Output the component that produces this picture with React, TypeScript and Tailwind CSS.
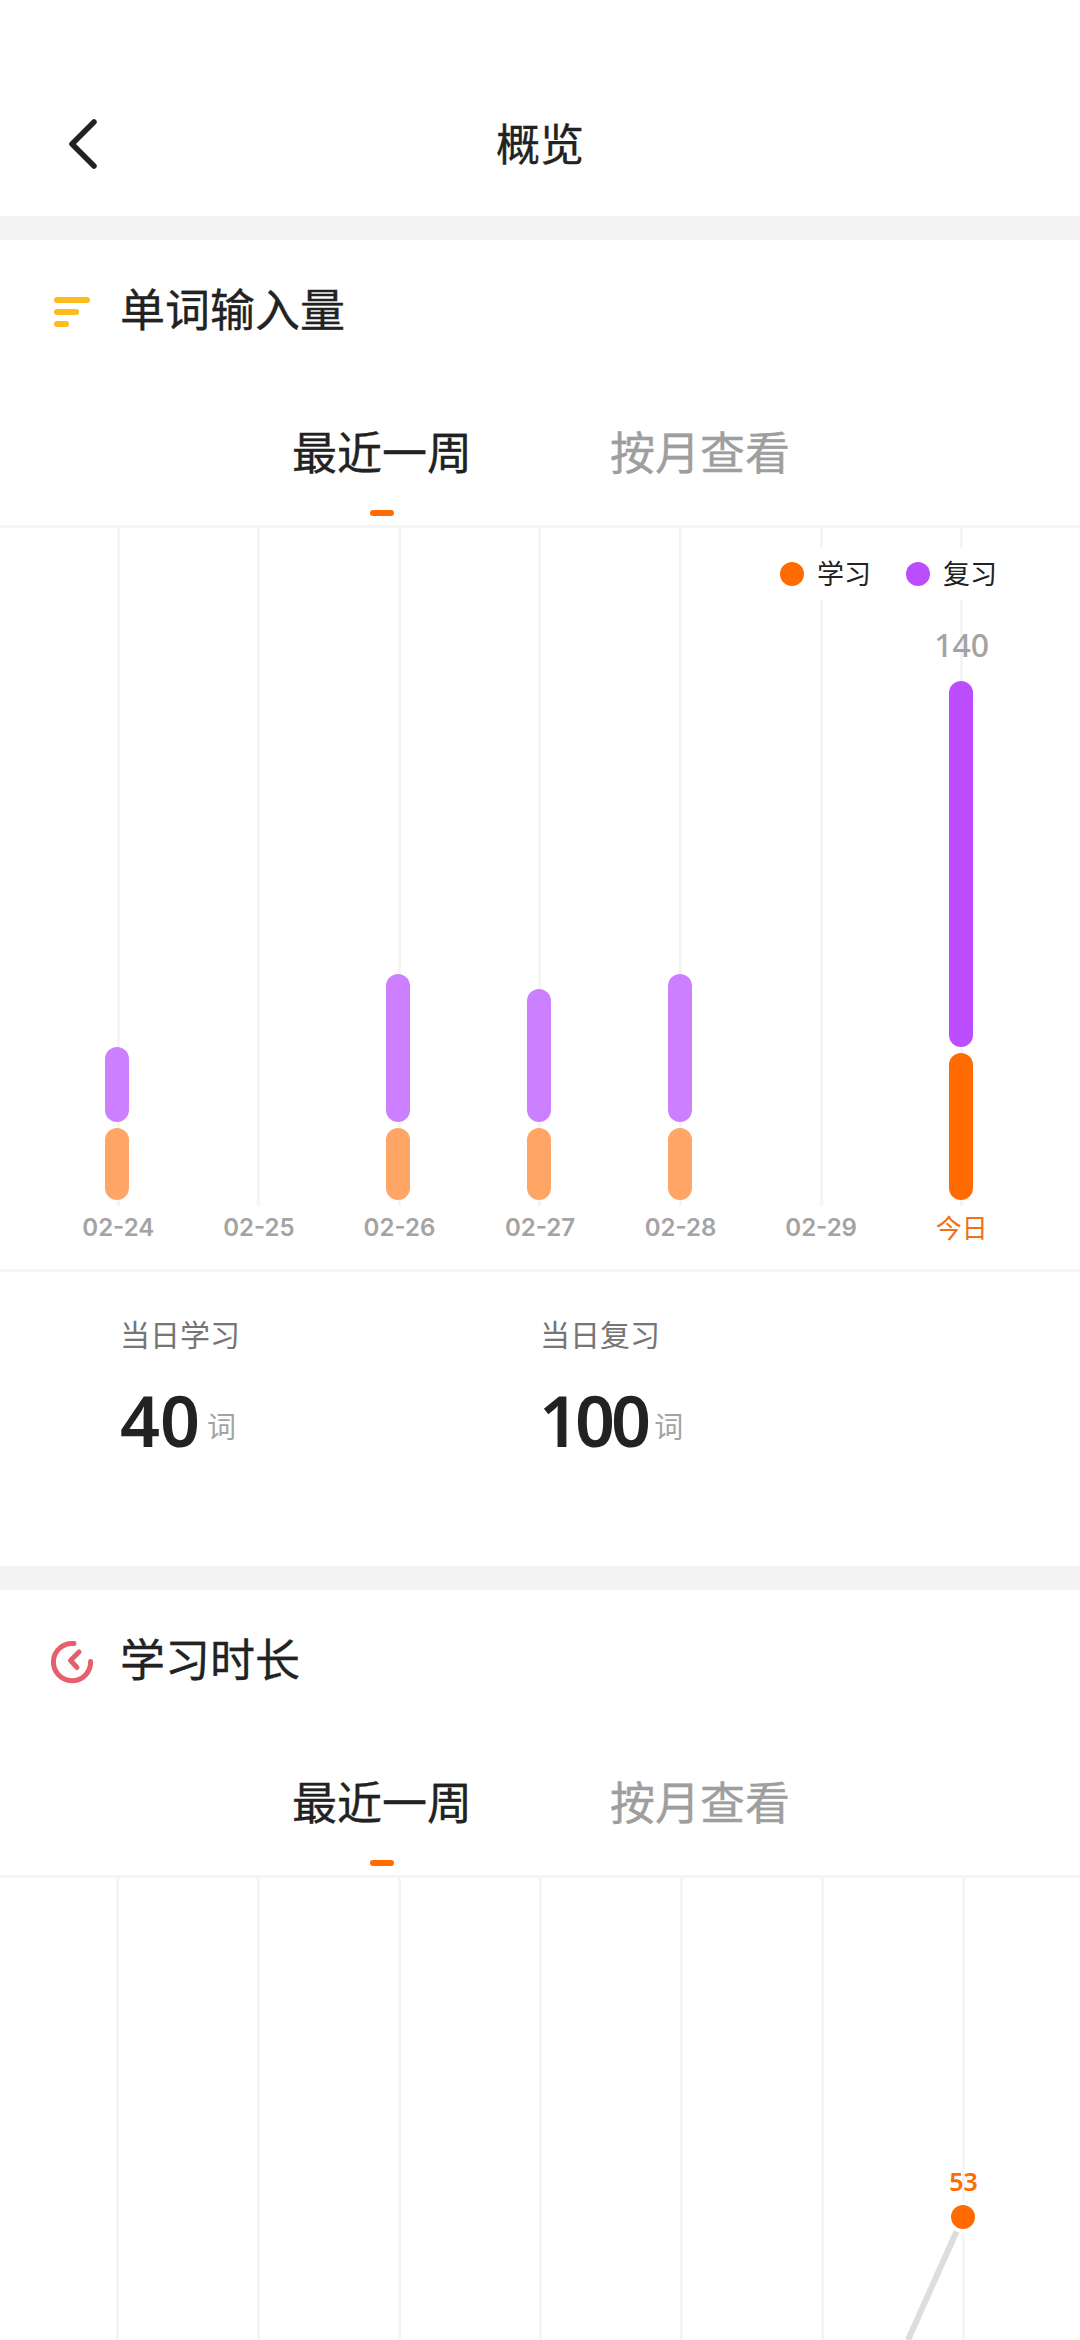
const FONT = "font-['Noto_Sans','Noto_Sans_CJK_SC',sans-serif]";

const BARS = [
  { label: '02-24', study: 72, review: 75 },
  { label: '02-25', study: 0, review: 0 },
  { label: '02-26', study: 72, review: 148 },
  { label: '02-27', study: 72, review: 133 },
  { label: '02-28', study: 72, review: 148 },
  { label: '02-29', study: 0, review: 0 },
  { label: '今日', study: 147, review: 366, today: true, total: 140 },
];

function BackIcon() {
  return (
    <svg width="30" height="50" viewBox="0 0 30 50" fill="none">
      <path d="M26 3 L4 25 L26 47" stroke="#222222" strokeWidth="5.5" strokeLinecap="round" strokeLinejoin="round" />
    </svg>
  );
}

function BarsIcon() {
  return (
    <div className="mt-[4px] ml-[54px] flex w-[36px] flex-col gap-[6px]">
      <div className="h-[6px] w-[36px] rounded-full bg-[#FFBC1F]" />
      <div className="h-[6px] w-[25px] rounded-full bg-[#FFBC1F]" />
      <div className="h-[6px] w-[15px] rounded-full bg-[#FFBC1F]" />
    </div>
  );
}

function ClockIcon() {
  return (
    <svg className="mt-[4px] ml-[50px]" width="44" height="44" viewBox="0 0 44 44" fill="none" stroke="#E5606B" strokeWidth="5" strokeLinecap="round" strokeLinejoin="round">
      <path d="M24 3.6 A18.6 18.6 0 1 0 40.6 21.5" />
      <path d="M29 12 L20.5 20.5 L27 27.5" />
    </svg>
  );
}

function SectionTitle({ icon, title }: { icon: React.ReactNode; title: string }) {
  return (
    <div className="flex h-[140px] items-center">
      <div className="w-[120px]">{icon}</div>
      <div className="text-[45px] leading-[60px] text-[#222222] [-webkit-text-stroke:0.35px]">{title}</div>
    </div>
  );
}

function Tabs() {
  return (
    <div className="flex h-[148px] border-b-[3px] border-[#F5F5F5] pt-[43px]">
      <div className="ml-[292px] flex w-[180px] flex-col items-center">
        <div className="text-[45px] leading-[60px] text-[#222222] [-webkit-text-stroke:0.35px]">最近一周</div>
        <div className="mt-[27px] h-[6px] w-[24px] rounded-full bg-[#FF6B00]" />
      </div>
      <div className="ml-[138px] text-[45px] leading-[60px] text-[#9E9E9E] [-webkit-text-stroke:0.35px]">按月查看</div>
    </div>
  );
}

function Legend({ color, label }: { color: string; label: string }) {
  return (
    <div className="flex items-center gap-[13px]">
      <div className={`h-[24px] w-[24px] rounded-full ${color}`} />
      <span className="text-[27px] leading-[36px] text-[#222222]">{label}</span>
    </div>
  );
}

function WordChart() {
  return (
    <div className="relative">
      <div className="grid h-[678px] grid-cols-7 px-[48px]">
        {BARS.map((b) => (
          <div
            key={b.label}
            className="flex flex-col items-center justify-end gap-[6px] bg-[linear-gradient(#F5F5F5,#F5F5F5)] bg-[length:3px_100%] bg-center bg-no-repeat pb-[6px]"
          >
            {b.total ? (
              <div className="mb-[8px] text-[32px] leading-[44px] font-medium text-[#A3A3A3]">{b.total}</div>
            ) : null}
            {b.review > 0 && (
              <div
                className={`w-[24px] -translate-x-px rounded-full ${b.today ? 'bg-[#BB4DFF]' : 'bg-[#CC80FF]'}`}
                style={{ height: b.review }}
              />
            )}
            {b.study > 0 && (
              <div
                className={`w-[24px] -translate-x-px rounded-full ${b.today ? 'bg-[#FF6B00]' : 'bg-[#FFA566]'}`}
                style={{ height: b.study }}
              />
            )}
          </div>
        ))}
      </div>
      <div className="absolute top-[20px] right-[83px] flex h-[52px] items-center gap-[35px] bg-white pl-[10px]">
        <Legend color="bg-[#FF6B00]" label="学习" />
        <Legend color="bg-[#BB4DFF]" label="复习" />
      </div>
      <div className="grid h-[66px] grid-cols-7 border-b-[3px] border-[#F5F5F5] px-[48px] pt-[4px]">
        {BARS.map((b) => (
          <div
            key={b.label}
            className={`text-center leading-[36px] ${b.today ? 'text-[26px] font-normal text-[#F07020]' : "font-['Inter','Noto_Sans',sans-serif] text-[24px] font-semibold text-[#A3A3A3]"}`}
          >
            {b.label}
          </div>
        ))}
      </div>
    </div>
  );
}

function Stat({ label, value }: { label: string; value: number }) {
  return (
    <div className="w-[420px]">
      <div className="text-[30px] leading-[40px] text-[#757575]">{label}</div>
      <div className="mt-[25px] flex items-baseline gap-[7px]">
        <span className={`text-[70px] leading-[80px] font-semibold text-[#222222] ${value >= 100 ? 'ml-[-1px] tracking-[-4px]' : ''}`}>
          {value}
        </span>
        <span className="-translate-y-[9px] text-[29px] leading-[40px] text-[#A3A3A3]">词</span>
      </div>
    </div>
  );
}

function TimeChart() {
  return (
    <div className="relative h-[462px] overflow-hidden">
      <div className="grid h-full grid-cols-7 pr-[46px] pl-[47px]">
        {[0, 1, 2, 3, 4, 5, 6].map((i) => (
          <div
            key={i}
            className="flex flex-col items-center bg-[linear-gradient(#F5F5F5,#F5F5F5)] bg-[length:3px_100%] bg-center bg-no-repeat"
          >
            {i === 6 && <div className="mt-[285px] text-[25px] leading-[36px] font-semibold text-[#FF6B00]">53</div>}
          </div>
        ))}
      </div>
      <svg className="absolute top-0 left-0" width="1080" height="462" fill="none">
        <path d="M963 339 L908 462" stroke="#DDDDDD" strokeWidth="6" />
        <circle cx="963" cy="339" r="14" fill="#FF6B00" stroke="#FFFFFF" strokeWidth="4" />
      </svg>
    </div>
  );
}

export default function App() {
  return (
    <div className={`h-[2340px] w-[1080px] overflow-hidden bg-white ${FONT}`}>
      <div className="flex h-[216px] items-end">
        <div className="relative flex h-[144px] w-full items-center justify-center">
          <div className="absolute top-[47px] left-[68px]">
            <BackIcon />
          </div>
          <div className="text-[44px] leading-[60px] text-[#222222] [-webkit-text-stroke:0.35px]">概览</div>
        </div>
      </div>
      <div className="h-[24px] bg-[#F4F4F4]" />
      <SectionTitle icon={<BarsIcon />} title="单词输入量" />
      <Tabs />
      <WordChart />
      <div className="flex h-[294px] pt-[43px] pl-[120px]">
        <Stat label="当日学习" value={40} />
        <Stat label="当日复习" value={100} />
      </div>
      <div className="h-[24px] bg-[#F4F4F4]" />
      <SectionTitle icon={<ClockIcon />} title="学习时长" />
      <Tabs />
      <TimeChart />
    </div>
  );
}
